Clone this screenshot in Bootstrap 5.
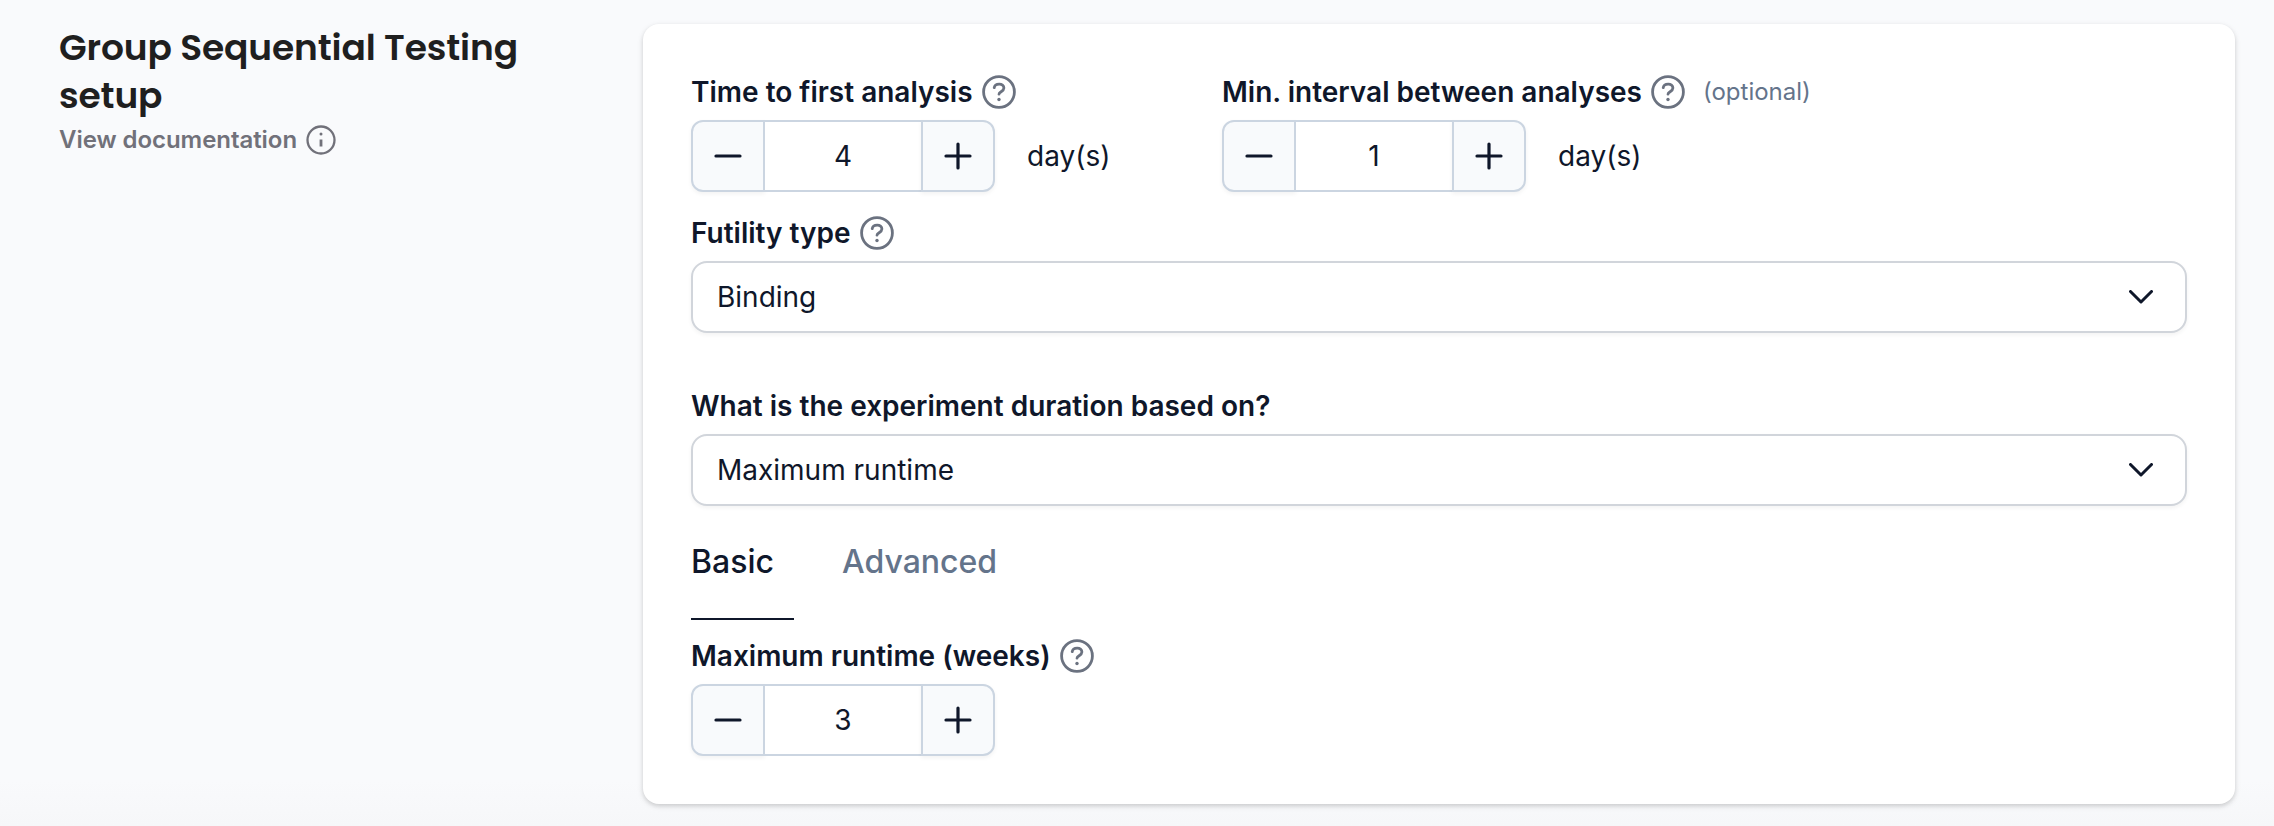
<!DOCTYPE html>
<html lang="en">
<head>
<meta charset="utf-8">
<meta name="viewport" content="width=device-width, initial-scale=1">
<title>Group Sequential Testing setup</title>
<link href="https://cdn.jsdelivr.net/npm/bootstrap@5.3.0/dist/css/bootstrap.min.css" rel="stylesheet">
<style>
  body { background: #f9fafc; color: #0f172a; font-family: Inter, "Liberation Sans", sans-serif; font-size: 28px; line-height: 40px; }
  .page-shell { padding: 24px 39px 22px 59px; min-height: 826px; background: linear-gradient(#f9fafc 780px, #f6f7f9); }
  .side-intro { width: 584px; }
  .side-title { font-family: Poppins, Inter, sans-serif; font-size: 36px; font-weight: 600; line-height: 48px; letter-spacing: -.13px; color: #1f1f1f; width: 500px; }
  .doc-link { font-size: 24px; font-weight: 600; line-height: 32px; color: #71717a; gap: 9px; margin-top: 4px; letter-spacing: -.05px; }
  .settings-panel { border-radius: 16px; padding: 48px; box-shadow: 0 2px 6px rgba(0,0,0,.1), 0 2px 4px rgba(0,0,0,.1); }
  .field-label { font-weight: 600; height: 40px; margin-bottom: 8px; gap: 9px; }
  .field-label .optional { font-size: 24px; font-weight: 400; color: #64748b; margin-left: 9px; }
  .help { color: #6b7280; }
  .stepper { width: 304px; height: 72px; }
  .stepper .btn { flex: 0 0 74px; color: #0f172a; border: 2px solid #cbd5e1; border-radius: 12px; background: #f8fafc; padding: 0; box-shadow: 0 2px 4px rgba(0,0,0,.05); }
  .stepper .btn:first-child { border-radius: 12px 0 0 12px; }
  .stepper .btn:last-child { border-radius: 0 12px 12px 0; }
  .stepper .form-control { min-width: 0; border: solid #cbd5e1; border-width: 2px 0; border-radius: 0; font-size: 28px; color: #0f172a; padding: 0; text-align: center; }
  .interval-field { width: 531px; }
  .unit { margin-left: 32px; }
  .select-box { height: 72px; border: 2px solid #d1d5db; border-radius: 16px; padding: 0 24px; color: #0f172a; font-size: 28px; box-shadow: 0 2px 4px rgba(0,0,0,.05); }
  .mode-tabs { margin: 32px 0 16px; font-size: 32px; line-height: 48px; font-weight: 500; }
  .mode-tabs .nav-link { color: #64748b; padding: 0 0 32px; border-bottom: 2px solid transparent; }
  .mode-tabs .nav-link.active { color: #0f172a; border-color: #0f172a; width: 103px; margin-right: 48px; }
</style>
</head>
<body>
<svg class="d-none">
  <symbol id="help" viewBox="0 0 34 34"><g fill="none" stroke="currentColor" stroke-width="2.8" stroke-linecap="round" stroke-linejoin="round"><circle cx="17" cy="17" r="15.400"/><path d="M12.2 12.700C13 7.900 21.900 7.900 21.900 13.100C21.900 16.500 17 16.800 17 19.200"/></g><circle cx="17" cy="24.500" r="1.700" fill="currentColor"/></symbol>
  <symbol id="minus" viewBox="0 0 28 28"><path d="M2 14h24" fill="none" stroke="currentColor" stroke-width="3.2" stroke-linecap="round"/></symbol>
  <symbol id="plus" viewBox="0 0 28 28"><path d="M2 14h24M14 2v24" fill="none" stroke="currentColor" stroke-width="3.2" stroke-linecap="round"/></symbol>
  <symbol id="chevron" viewBox="0 0 24 14"><path d="M1.500 1.500L12 12L22.500 1.500" fill="none" stroke="currentColor" stroke-width="3" stroke-linecap="round" stroke-linejoin="round"/></symbol>
</svg>
<div class="page-shell d-flex align-items-start">
  <aside class="side-intro flex-shrink-0">
    <h2 class="side-title mb-0">Group Sequential Testing setup</h2>
    <a href="#" class="doc-link d-flex align-items-center text-decoration-none">View documentation
      <svg width="30" height="30" viewBox="0 0 30 30" fill="none" stroke="currentColor" stroke-width="2.3"><circle cx="15" cy="15" r="13.500"/><path d="M15 14.500v7" stroke-width="2.800"/><circle cx="15" cy="9" r="1.500" fill="currentColor" stroke="none"/></svg>
    </a>
  </aside>
  <main class="settings-panel bg-white flex-grow-1">
    <div class="d-flex" style="margin-bottom: 21px">
      <div class="interval-field">
        <label class="field-label d-flex align-items-center">Time to first analysis <svg class="help" width="34" height="34"><use href="#help"/></svg></label>
        <div class="d-flex align-items-center">
          <div class="stepper d-flex"><button class="btn d-flex align-items-center justify-content-center"><svg width="28" height="28"><use href="#minus"/></svg></button><input class="form-control flex-fill" value="4"><button class="btn d-flex align-items-center justify-content-center"><svg width="28" height="28"><use href="#plus"/></svg></button></div>
          <span class="unit">day(s)</span>
        </div>
      </div>
      <div>
        <label class="field-label d-flex align-items-center">Min. interval between analyses <svg class="help" width="34" height="34"><use href="#help"/></svg><span class="optional">(optional)</span></label>
        <div class="d-flex align-items-center">
          <div class="stepper d-flex"><button class="btn d-flex align-items-center justify-content-center"><svg width="28" height="28"><use href="#minus"/></svg></button><input class="form-control flex-fill" value="1"><button class="btn d-flex align-items-center justify-content-center"><svg width="28" height="28"><use href="#plus"/></svg></button></div>
          <span class="unit">day(s)</span>
        </div>
      </div>
    </div>
    <div style="margin-bottom: 53px">
      <label class="field-label d-flex align-items-center">Futility type <svg class="help" width="34" height="34"><use href="#help"/></svg></label>
      <button class="select-box btn bg-white w-100 d-flex align-items-center justify-content-between">Binding <svg class="me-2" width="24" height="14"><use href="#chevron"/></svg></button>
    </div>
    <div>
      <label class="field-label d-flex align-items-center">What is the experiment duration based on?</label>
      <button class="select-box btn bg-white w-100 d-flex align-items-center justify-content-between">Maximum runtime <svg class="me-2" width="24" height="14"><use href="#chevron"/></svg></button>
    </div>
    <nav class="mode-tabs nav">
      <a class="nav-link active" href="#">Basic</a>
      <a class="nav-link" href="#">Advanced</a>
    </nav>
    <div>
      <label class="field-label d-flex align-items-center">Maximum runtime (weeks) <svg class="help" width="34" height="34"><use href="#help"/></svg></label>
      <div class="stepper d-flex"><button class="btn d-flex align-items-center justify-content-center"><svg width="28" height="28"><use href="#minus"/></svg></button><input class="form-control flex-fill" value="3"><button class="btn d-flex align-items-center justify-content-center"><svg width="28" height="28"><use href="#plus"/></svg></button></div>
    </div>
  </main>
</div>
<script src="https://cdn.jsdelivr.net/npm/bootstrap@5.3.0/dist/js/bootstrap.bundle.min.js"></script>
</body>
</html>
